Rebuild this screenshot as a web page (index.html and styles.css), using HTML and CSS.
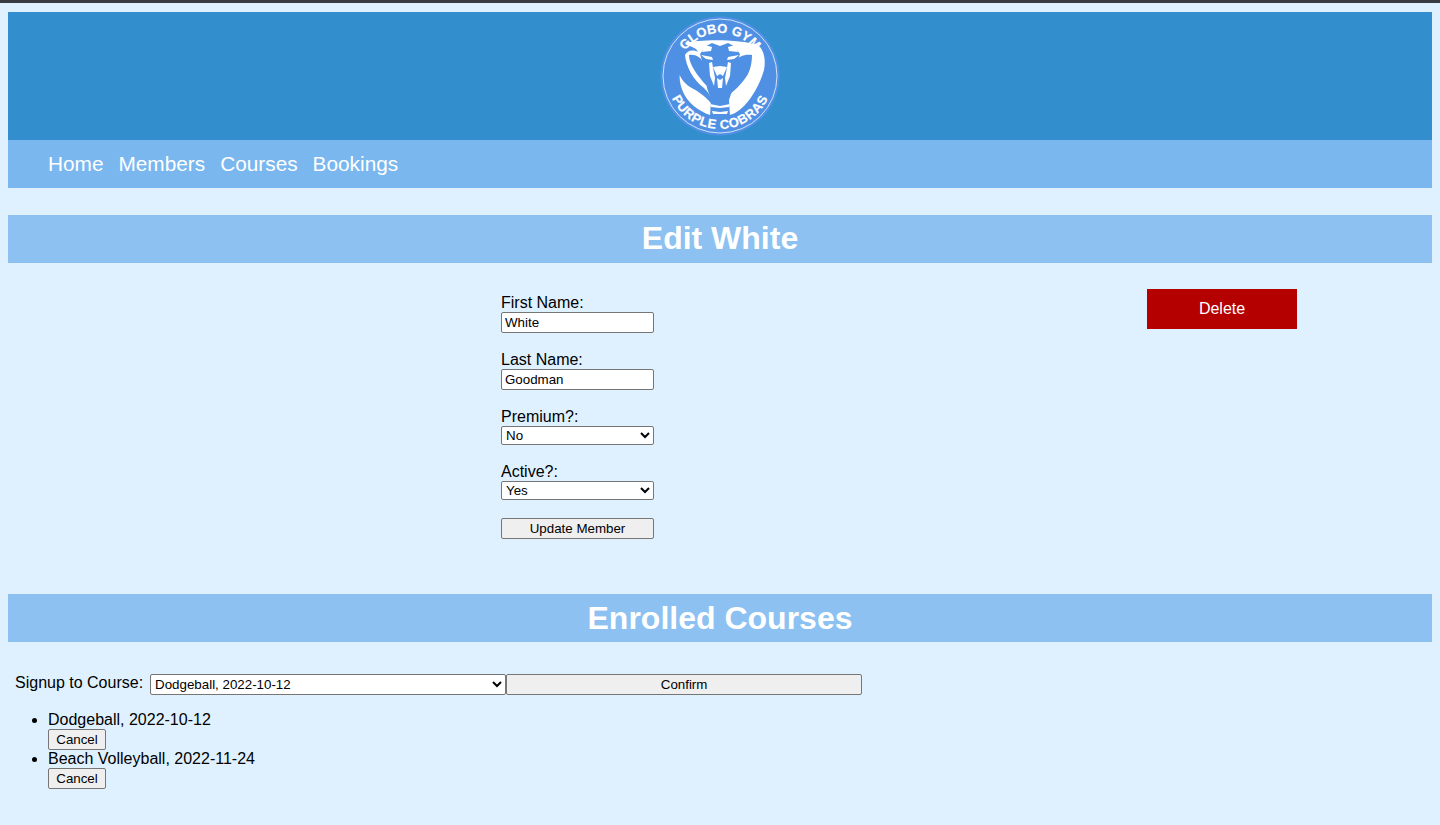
FILE: index.html
```html
<!DOCTYPE html>
<html lang="en">
<head>
<meta charset="utf-8">
<title>Edit White</title>
<link rel="stylesheet" href="styles.css">
</head>
<body>
<div class="topline"></div>
<header class="banner">
  <svg class="logo" width="120" height="120" viewBox="0 0 120 120" xmlns="http://www.w3.org/2000/svg">
    <defs>
      <path id="arcTop" d="M17,60 A43,43 0 0 1 103,60"/>
      <path id="arcBottom" d="M7,60 A53,53 0 0 0 113,60"/>
      <g id="head">
        <path class="b" d="M60,30L52,27L46,30L40,38L44,52L47,72L51,84L50,100L60,102Z"/>
        <path class="w" d="M45,29L52,31L51,35L42,36ZM41,39L52,41L53,44L46,43Z"/>
        <path class="w" d="M49,47L52,46L55,62L54,70L50,60ZM53,51L60,50L60,58L57,60Z"/>
        <path class="w" d="M57,62L60,64L60,72L58,72Z"/>
        <path class="w" d="M50,88L60,90L60,92L51,91ZM52,95L60,96L60,98L53,98Z"/>
      </g>
    </defs>
    <circle cx="60" cy="60" r="59.5" fill="#4f90e4"/>
    <circle cx="60" cy="60" r="57" fill="none" stroke="#dcebfb" stroke-width="0.9"/>
    <path class="w" d="M26,27C40,23 80,23 98,29C104,34 106,44 104,54C100,68 92,82 84,90C78,96 72,99 66,100L54,100C44,98 30,90 24,78C20,70 19,62 20,58Z"/>
    <path class="b" d="M13,30C18,27 26,27 36,33L38,36C32,33 27,35 25,39C26,50 33,64 44,72C49,77 52,82 53,90C48,82 38,75 30,71C24,67 20,62 18,54C15,46 13,38 13,30Z"/>
    <path class="b" d="M29,39C35,38 41,41 44,48C47,55 48,62 47,70C41,64 35,56 32,50C30,46 29,42 29,39Z"/>
    <path class="b" d="M92,39C85,38 78,40 74,47C70,55 68,66 65,81C73,77 82,68 88,58C91,52 92,45 92,39Z"/>
    <use href="#head"/>
    <use href="#head" transform="matrix(-1 0 0 1 120 0)"/>
    <text class="logo-text"><textPath href="#arcTop" startOffset="50%" text-anchor="middle">GLOBO GYM</textPath></text>
    <text class="logo-text logo-text-low"><textPath href="#arcBottom" startOffset="50%" text-anchor="middle">PURPLE COBRAS</textPath></text>
  </svg>
</header>
<nav class="nav">
  <a href="#">Home</a>
  <a href="#">Members</a>
  <a href="#">Courses</a>
  <a href="#">Bookings</a>
</nav>
<h1 class="title title-edit">Edit White</h1>
<section class="edit">
  <form class="member-form">
    <div class="field"><label for="first">First Name:</label><input id="first" type="text" value="White"></div>
    <div class="field"><label for="last">Last Name:</label><input id="last" type="text" value="Goodman"></div>
    <div class="field"><label for="premium">Premium?:</label><select id="premium"><option>No</option><option>Yes</option></select></div>
    <div class="field"><label for="active">Active?:</label><select id="active"><option>Yes</option><option>No</option></select></div>
    <button type="button" class="update">Update Member</button>
  </form>
  <button type="button" class="delete">Delete</button>
</section>
<h1 class="title title-courses">Enrolled Courses</h1>
<form class="signup">
  <label for="course">Signup to Course:</label>
  <select id="course"><option>Dodgeball, 2022-10-12</option><option>Beach Volleyball, 2022-11-24</option></select><button type="button" class="confirm">Confirm</button>
</form>
<ul class="courses">
  <li>Dodgeball, 2022-10-12<br><button type="button">Cancel</button></li>
  <li>Beach Volleyball, 2022-11-24<br><button type="button">Cancel</button></li>
</ul>
</body>
</html>
```
FILE: styles.css
```css
* { box-sizing: border-box; }
html { background: #dff1ff; height: 100%; overflow: hidden; }
body {
  margin: 12px 8px 0;
  font-family: "Liberation Sans", Arial, sans-serif;
  font-size: 16px;
  line-height: 18px;
  color: #000;
}
.topline {
  position: absolute;
  top: 0; left: 0; right: 0;
  height: 3px;
  background: #383b42;
}
.banner {
  height: 128px;
  background: #328ecd;
  display: flex;
  justify-content: center;
  padding-top: 4px;
}
.logo { display: block; }
.w { fill: #fff; }
.b { fill: #4f90e4; }
.logo-text { fill: #fff; stroke: #fff; stroke-width: 0.2; font: bold 13px "Liberation Sans", Arial, sans-serif; }
.logo-text-low { letter-spacing: 0.6px; }
.nav {
  height: 48px;
  background: #7ab7ef;
  display: flex;
  align-items: center;
  gap: 15px;
  padding-left: 40px;
}
.nav a { color: #fff; text-decoration: none; font-size: 20.8px; line-height: 24px; }
.title {
  margin: 0;
  height: 48px;
  line-height: 47px;
  background: #8cc1f1;
  color: #fff;
  font-size: 32px;
  font-weight: bold;
  text-align: center;
}
.title-edit { margin-top: 27px; }
.title-courses { line-height: 48px; }
.edit {
  display: flex;
  justify-content: space-between;
  align-items: flex-start;
  height: 331px;
  padding: 26px 135px 0 493px;
}
.member-form { width: 153px; padding-top: 5px; }
.field { display: flex; flex-direction: column; margin-bottom: 18px; }
.field label { display: block; height: 18px; }
input, select, button { font: 13.33px "Liberation Sans", Arial, sans-serif; margin: 0; }
.field input { width: 153px; height: 21px; padding: 1px 3px; border: 1px solid #767676; border-radius: 2px; background: #fff; }
.field select { width: 153px; height: 19px; background: #fff; border: 1px solid #767676; border-radius: 2px; }
.update, .confirm, .courses button {
  height: 21px;
  padding: 1px 6px;
  background: #efefef;
  border: 1px solid #767676;
  border-radius: 2px;
  color: #000;
}
.update { width: 153px; display: block; }
.delete {
  width: 150px;
  height: 40px;
  background: #b50000;
  color: #fff;
  border: 0;
  font-size: 16px;
}
.signup { display: flex; align-items: flex-start; height: 21px; margin-top: 32px; padding-left: 7px; }
.signup label { margin-right: 7px; line-height: 18px; }
.signup select { width: 356px; height: 21px; background: #fff; border: 1px solid #767676; border-radius: 2px; }
.confirm { width: 356px; }
.courses { margin: 16px 0 0; padding: 0 0 0 40px; }
.courses li { height: 39px; }
.courses button { width: 58px; display: inline-block; vertical-align: top; }
```
